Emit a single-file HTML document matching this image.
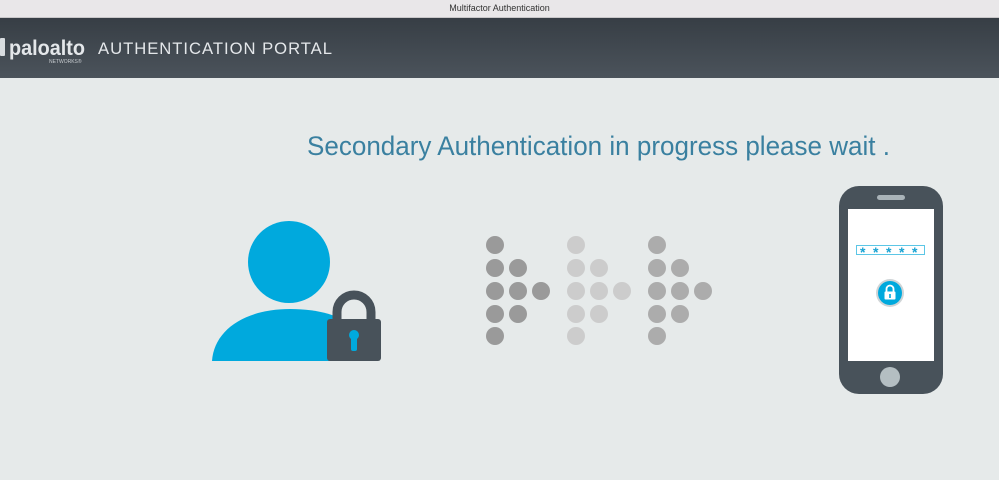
<!DOCTYPE html>
<html><head><meta charset="utf-8"><style>
html,body{margin:0;padding:0;width:999px;height:480px;overflow:hidden;background:#e6eaea;font-family:"Liberation Sans",sans-serif;}
.tb{position:absolute;left:0;top:0;width:999px;height:17px;background:#e9e7e9;border-bottom:1px solid #c9c7c9;font-size:9px;color:#333;text-align:center;line-height:17px;}
.hd{position:absolute;left:0;top:18px;width:999px;height:60px;background:linear-gradient(#373e45,#4b535b);}
svg{position:absolute;left:0;top:0}
</style></head><body>
<div class="tb">Multifactor Authentication</div>
<div class="hd"></div>
<svg width="999" height="480" viewBox="0 0 999 480">
<rect x="0" y="38" width="5" height="18" rx="1" fill="#d8dcdf"/>
<text x="9" y="55" font-size="21" font-weight="bold" fill="#e4e7ea" font-family="Liberation Sans" textLength="76" lengthAdjust="spacingAndGlyphs">paloalto</text>
<text x="49" y="63" font-size="5" fill="#c8ccd0" font-family="Liberation Sans">NETWORKS®</text>
<text x="98" y="54" font-size="17" fill="#e4e7ea" font-family="Liberation Sans" textLength="235" lengthAdjust="spacingAndGlyphs" letter-spacing="1">AUTHENTICATION PORTAL</text>
<text x="307" y="155" font-size="27" fill="#3a80a0" font-family="Liberation Sans" textLength="583" lengthAdjust="spacingAndGlyphs">Secondary Authentication in progress please wait .</text>
<circle cx="289" cy="262" r="41" fill="#00a9dd"/>
<path d="M212 361 C214 330 245 309 290 309 C320 309 340 316 350 325 L350 361 Z" fill="#00a9dd"/>
<path d="M337 320 V312 A17 17 0 0 1 371 312 V320" fill="none" stroke="#48525a" stroke-width="9"/>
<rect x="327" y="319" width="54" height="42" rx="3" fill="#48525a"/>
<circle cx="354" cy="335" r="5" fill="#00a9dd"/>
<rect x="351" y="336" width="6" height="15" rx="2" fill="#00a9dd"/>
<g fill="#9a9a9a">
<circle cx="495" cy="245" r="9"/><circle cx="495" cy="268" r="9"/><circle cx="495" cy="291" r="9"/><circle cx="495" cy="314" r="9"/><circle cx="495" cy="336" r="9"/>
<circle cx="518" cy="268" r="9"/><circle cx="518" cy="291" r="9"/><circle cx="518" cy="314" r="9"/><circle cx="541" cy="291" r="9"/></g>
<g fill="#cccccc">
<circle cx="576" cy="245" r="9"/><circle cx="576" cy="268" r="9"/><circle cx="576" cy="291" r="9"/><circle cx="576" cy="314" r="9"/><circle cx="576" cy="336" r="9"/>
<circle cx="599" cy="268" r="9"/><circle cx="599" cy="291" r="9"/><circle cx="599" cy="314" r="9"/><circle cx="622" cy="291" r="9"/></g>
<g fill="#acacac">
<circle cx="657" cy="245" r="9"/><circle cx="657" cy="268" r="9"/><circle cx="657" cy="291" r="9"/><circle cx="657" cy="314" r="9"/><circle cx="657" cy="336" r="9"/>
<circle cx="680" cy="268" r="9"/><circle cx="680" cy="291" r="9"/><circle cx="680" cy="314" r="9"/><circle cx="703" cy="291" r="9"/></g>
<rect x="839" y="186" width="104" height="208" rx="20" fill="#48525a"/>
<rect x="877" y="195" width="28" height="5" rx="2.5" fill="#a9b3b8"/>
<rect x="848" y="209" width="86" height="152" fill="#ffffff"/>
<circle cx="890" cy="377" r="10" fill="#b4bec2"/>
<rect x="856.5" y="245.5" width="68" height="9" fill="none" stroke="#5cc6e6" stroke-width="1"/>
<g fill="#1aa3d3" font-size="14" font-weight="bold" font-family="Liberation Sans"><text x="860" y="257">*</text><text x="873" y="257">*</text><text x="886" y="257">*</text><text x="899" y="257">*</text><text x="912" y="257">*</text></g>
<circle cx="890" cy="293" r="14" fill="#cfd4d6"/>
<circle cx="890" cy="293" r="12" fill="#00a9dd"/>
<path d="M886.5 292 V289 A3.5 3.5 0 0 1 893.5 289 V292" fill="none" stroke="#fff" stroke-width="1.8"/>
<rect x="884.5" y="291.5" width="11" height="8" rx="1" fill="#fff"/>
<rect x="889.2" y="294" width="1.6" height="4" fill="#00a9dd"/>
</svg>
</body></html>
